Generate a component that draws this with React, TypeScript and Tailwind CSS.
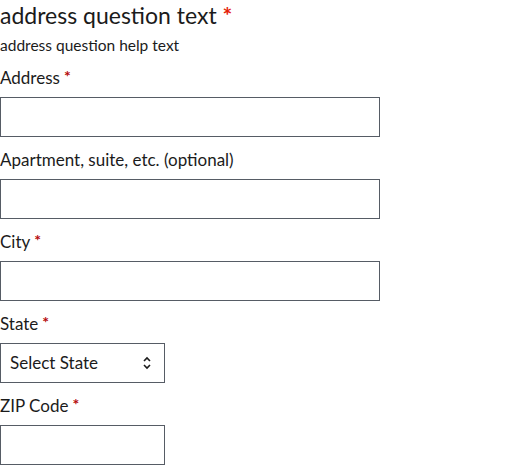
import React from "react";

const font = { fontFamily: "Lato, 'Noto Sans', sans-serif" };

function Star() {
  return <span className="ml-[4px] text-[#b50909] text-[16px] font-bold leading-none relative top-[-2px]">*</span>;
}

function Field({ label, required, narrow }: { label: string; required?: boolean; narrow?: boolean }) {
  return (
    <div className="flex flex-col">
      <label className="mt-[12px] text-[17px] leading-[22px] text-[#1b1b1b]">
        {label}
        {required && <Star />}
      </label>
      <input
        className={`mt-2 h-[40px] border border-[#565c65] bg-white ${narrow ? "w-[165px]" : "w-[380px]"}`}
      />
    </div>
  );
}

export default function App() {
  return (
    <div className="w-[512px] h-[466px] bg-white text-[#1b1b1b] overflow-hidden" style={font}>
      <div className="text-[23px] leading-[30px]">
        address question text{" "}
        <span className="text-[#e52207] font-bold text-[23px] leading-none relative top-[0px]">*</span>
      </div>
      <div className="text-[15.5px] leading-[20px] mt-[5px]">address question help text</div>
      <Field label="Address" required />
      <Field label="Apartment, suite, etc. (optional)" />
      <Field label="City" required />
      <div className="flex flex-col">
        <label className="mt-[12px] text-[17px] leading-[22px]">
          State
          <Star />
        </label>
        <div className="mt-2 h-[40px] w-[165px] border border-[#565c65] flex items-center justify-between pl-[9px] pr-[12px]">
          <span className="text-[17px]">Select State</span>
          <svg width="10" height="16" viewBox="0 0 10 16" fill="none" stroke="#1b1b1b" strokeWidth="1.6">
            <path d="M2 6 L5 3 L8 6" />
            <path d="M2 10 L5 13 L8 10" />
          </svg>
        </div>
      </div>
      <Field label="ZIP Code" required narrow />
    </div>
  );
}
